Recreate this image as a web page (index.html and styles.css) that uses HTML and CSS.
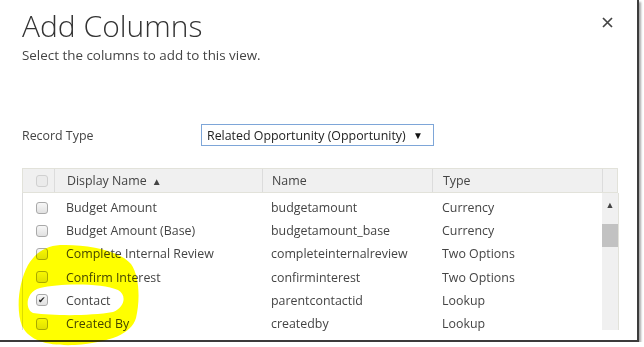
FILE: index.html
```html
<!DOCTYPE html>
<html>
<head>
  <title>Add Columns</title>
  <link rel="stylesheet" href="styles.css">
</head>
<body>

<div class="dialog">
  <div class="dialog-head">
    <h1 class="title">Add Columns</h1>
    <button class="close" title="Close">
      <svg width="11" height="11" viewBox="0 0 11 11"><path d="M1 1 L10 10 M10 1 L1 10" stroke="#444" stroke-width="1.7" fill="none"/></svg>
    </button>
  </div>
  <p class="subtitle">Select the columns to add to this view.</p>

  <div class="record-row">
    <label class="record-label">Record Type</label>
    <div class="select">
      <span>Related Opportunity (Opportunity)</span>
      <span class="select-arrow">&#9660;</span>
    </div>
  </div>

  <div class="grid">
    <div class="grid-head">
      <div class="col col-check"><span class="box box-head"></span></div>
      <div class="col col-display">Display Name <span class="sort">&#9650;</span></div>
      <div class="col col-name">Name</div>
      <div class="col col-type">Type</div>
      <div class="col col-scroll"></div>
    </div>
    <div class="grid-body">
      <div class="rows">
        <div class="row">
          <div class="col col-check"><span class="box"></span></div>
          <div class="col col-display">Budget Amount</div>
          <div class="col col-name">budgetamount</div>
          <div class="col col-type">Currency</div>
        </div>
        <div class="row">
          <div class="col col-check"><span class="box"></span></div>
          <div class="col col-display">Budget Amount (Base)</div>
          <div class="col col-name">budgetamount_base</div>
          <div class="col col-type">Currency</div>
        </div>
        <div class="row">
          <div class="col col-check"><span class="box"></span></div>
          <div class="col col-display">Complete Internal Review</div>
          <div class="col col-name">completeinternalreview</div>
          <div class="col col-type">Two Options</div>
        </div>
        <div class="row">
          <div class="col col-check"><span class="box"></span></div>
          <div class="col col-display">Confirm Interest</div>
          <div class="col col-name">confirminterest</div>
          <div class="col col-type">Two Options</div>
        </div>
        <div class="row">
          <div class="col col-check"><span class="box checked">&#10004;</span></div>
          <div class="col col-display">Contact</div>
          <div class="col col-name">parentcontactid</div>
          <div class="col col-type">Lookup</div>
        </div>
        <div class="row">
          <div class="col col-check"><span class="box"></span></div>
          <div class="col col-display">Created By</div>
          <div class="col col-name">createdby</div>
          <div class="col col-type">Lookup</div>
        </div>
      </div>
      <div class="scrollbar">
        <span class="scroll-up">&#9650;</span>
        <span class="scroll-thumb"></span>
      </div>
    </div>
  </div>
</div>

<!-- highlighter mark drawn over the screenshot -->
<svg class="marker" width="644" height="347" viewBox="0 0 644 347">
  <path fill="#ffff00" fill-rule="evenodd" d="
    M60 245 C86 244 119 250 131 264 C140 277 140 301 136 318 C131 334 111 342 75 345
    C50 346 30 342 22 326 C16 310 18 284 28 265 C36 252 46 246 60 245 Z
    M40 288 C60 283 102 283 118 290 C127 295 125 307 113 312
    C90 316 55 316 33 313 C25 310 25 292 40 288 Z"/>
</svg>

</body>
</html>
```

FILE: styles.css
```css
body {
  margin: 0;
  background: #fff;
  font-family: "Open Sans", "Noto Sans", sans-serif;
  color: #444;
}

.dialog {
  width: 639px;
  height: 342px;
  box-sizing: border-box;
  padding: 0 0 0 22px;
  border-right: 2px solid #3c3c3c;
  border-bottom: 2px solid #3c3c3c;
  box-shadow: 2px 2px 2px rgba(0, 0, 0, 0.35);
  overflow: hidden;
}

.dialog-head {
  display: flex;
  justify-content: space-between;
  align-items: flex-start;
  padding-top: 7px;
}

.title {
  margin: 0;
  font-size: 30px;
  font-weight: 300;
  line-height: 38px;
  color: #333;
}

.close {
  border: 0;
  background: none;
  padding: 0;
  margin: 10px 24px 0 0;
  width: 11px;
  height: 11px;
  display: flex;
}

.subtitle {
  margin: 0;
  font-size: 13.4px;
  line-height: 20px;
}

.record-row {
  display: flex;
  align-items: center;
  margin-top: 59px;
}

.record-label {
  width: 179px;
  font-size: 12.4px;
}

.select {
  width: 233px;
  height: 22px;
  box-sizing: border-box;
  border: 1px solid #7ea6d8;
  display: flex;
  align-items: center;
  justify-content: space-between;
  padding: 0 10px 0 5px;
  font-size: 12.4px;
  color: #222;
  white-space: nowrap;
}

.select-arrow {
  font-size: 10px;
  color: #111;
}

.grid {
  width: 596px;
  margin-top: 22px;
  font-size: 12.4px;
}

.grid-head {
  display: flex;
  height: 25px;
  box-sizing: border-box;
  background: #f0f0f0;
  border: 1px solid #e2e2da;
}

.col {
  display: flex;
  align-items: center;
  box-sizing: border-box;
  white-space: nowrap;
}

.grid-head .col + .col {
  border-left: 1px solid #dcdcdc;
}

.grid-head .col-scroll {
  flex: 1;
}

.col-check {
  width: 31px;
  padding-left: 13px;
}

.col-display {
  width: 208px;
  padding-left: 12px;
}

.col-name {
  width: 170px;
  padding-left: 9px;
}

.col-type {
  width: 170px;
  padding-left: 10px;
}

.sort {
  font-size: 10px;
  margin-left: 5px;
  color: #444;
}

.grid-body {
  display: flex;
  height: 137px;
  border-left: 1px solid #dcdcdc;
}

.rows {
  flex: 1;
  padding-top: 3px;
}

.row {
  display: flex;
  height: 23.2px;
}

.box {
  width: 12px;
  height: 12px;
  box-sizing: border-box;
  border: 1px solid #a9a9a9;
  border-radius: 3px;
  background: linear-gradient(#f7f7f7, #e1e1e1);
  font-size: 9px;
  line-height: 10px;
  text-align: center;
  color: #222;
}

.box-head {
  border-color: #d0d0d0;
  background: #ebebeb;
}

.scrollbar {
  width: 19px;
  background: #f0f0f0;
  border-right: 1px solid #e2e2da;
  display: flex;
  flex-direction: column;
  align-items: center;
}

.scroll-up {
  font-size: 9px;
  color: #444;
  margin-top: 7px;
  line-height: 10px;
}

.scroll-thumb {
  width: 16px;
  height: 23px;
  margin-top: 14px;
  background: #c2c2c2;
}

.marker {
  position: absolute;
  left: 0;
  top: 0;
  mix-blend-mode: multiply;
  pointer-events: none;
}
```
